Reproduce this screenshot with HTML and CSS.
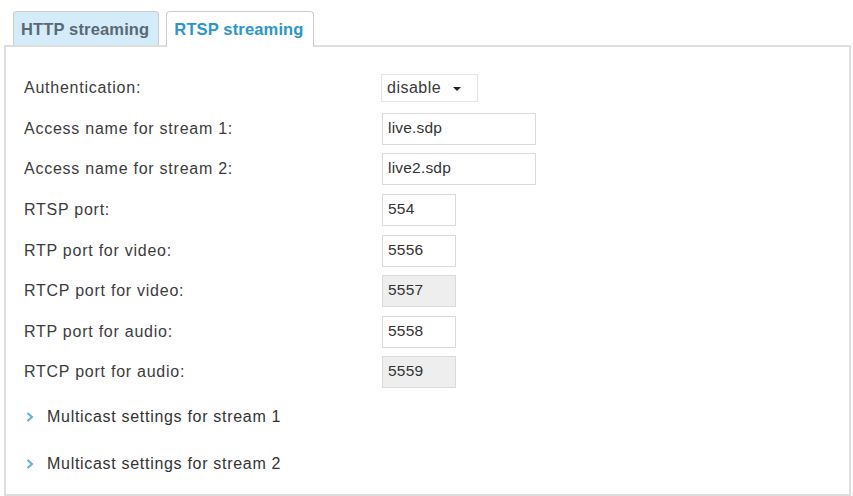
FILE: index.html
```html
<!DOCTYPE html>
<html lang="en">
<head>
<meta charset="utf-8">
<title>Streaming settings</title>
<link rel="stylesheet" href="styles.css">
</head>
<body>
  <div class="tabs">
    <div class="tab">HTTP streaming</div>
    <div class="tab active">RTSP streaming</div>
  </div>
  <div class="panel">
    <div class="form">
      <div class="label">Authentication:</div>
      <div class="ctl"><div class="select">disable <span class="caret"></span></div></div>

      <div class="label">Access name for stream 1:</div>
      <div class="ctl"><div class="input wide">live.sdp</div></div>

      <div class="label">Access name for stream 2:</div>
      <div class="ctl"><div class="input wide">live2.sdp</div></div>

      <div class="label">RTSP port:</div>
      <div class="ctl"><div class="input port">554</div></div>

      <div class="label">RTP port for video:</div>
      <div class="ctl"><div class="input port">5556</div></div>

      <div class="label">RTCP port for video:</div>
      <div class="ctl"><div class="input port disabled">5557</div></div>

      <div class="label">RTP port for audio:</div>
      <div class="ctl"><div class="input port">5558</div></div>

      <div class="label">RTCP port for audio:</div>
      <div class="ctl"><div class="input port disabled">5559</div></div>
    </div>

    <div class="expanders">
      <div class="expander">
        <svg class="chev" viewBox="0 0 8 10" width="8" height="10"><path d="M1.5 1 L6 5 L1.5 9" fill="none" stroke="#5ab0de" stroke-width="2"/></svg>
        <span>Multicast settings for stream 1</span>
      </div>
      <div class="expander">
        <svg class="chev" viewBox="0 0 8 10" width="8" height="10"><path d="M1.5 1 L6 5 L1.5 9" fill="none" stroke="#5ab0de" stroke-width="2"/></svg>
        <span>Multicast settings for stream 2</span>
      </div>
    </div>
  </div>
</body>
</html>
```

FILE: styles.css
```css
html, body {
  margin: 0;
  padding: 0;
  background: #ffffff;
}

body {
  font-family: "Liberation Sans", Arial, sans-serif;
  color: #3a3a3a;
  width: 853px;
  height: 496px;
  overflow: hidden;
}

/* tab strip */
.tabs {
  display: flex;
  gap: 7px;
  padding: 11px 0 0 13px;
  height: 34px;
  position: relative;
  z-index: 1;
}

.tab {
  box-sizing: border-box;
  height: 34px;
  padding: 8px 9px 0 7px;
  border: 1px solid #c9cdd1;
  border-bottom: none;
  border-radius: 4px 4px 0 0;
  background: #d4ecf9;
  color: #5b6874;
  font-weight: bold;
  font-size: 16.5px;
  letter-spacing: 0.15px;
}

.tab.active {
  background: #ffffff;
  color: #2b95cf;
  height: 36px;
  padding-right: 9px;
}

/* settings panel */
.panel {
  box-sizing: border-box;
  margin: 0 2px 0 4px;
  height: 451px;
  border: 2px solid #dedede;
  padding: 21px 0 0 18px;
}

.form {
  display: grid;
  grid-template-columns: 358px 1fr;
  grid-auto-rows: 40.6px;
  align-items: center;
}

.label {
  font-size: 16px;
  letter-spacing: 0.75px;
  color: #3c3c3c;
}

.ctl {
  display: flex;
  align-items: center;
}

.select {
  box-sizing: border-box;
  height: 28px;
  width: 97px;
  margin-left: -1px;
  margin-top: -1px;
  border: 1px solid #e6e6e6;
  padding: 4px 0 0 5px;
  font-size: 16px;
  color: #3a3a3a;
  letter-spacing: 0.5px;
}

.caret {
  display: inline-block;
  width: 0;
  height: 0;
  margin-left: 7px;
  vertical-align: 2px;
  border-left: 4px solid transparent;
  border-right: 4px solid transparent;
  border-top: 4px solid #222;
}

.input {
  box-sizing: border-box;
  height: 32px;
  border: 1px solid #dadada;
  padding: 5px 0 0 5px;
  font-size: 15.5px;
  letter-spacing: 0.2px;
  color: #333;
  background: #ffffff;
}

.input.wide { width: 154px; }
.input.port { width: 74px; }
.input.disabled { background: #eeeeee; }

/* collapsed sections */
.expanders {
  display: flex;
  flex-direction: column;
  gap: 29px;
  margin-top: 15px;
  padding-left: 2px;
}

.expander {
  display: flex;
  align-items: center;
  gap: 13px;
  font-size: 16px;
  letter-spacing: 0.7px;
  color: #333;
  height: 18px;
}

.chev { flex: none; }
```
